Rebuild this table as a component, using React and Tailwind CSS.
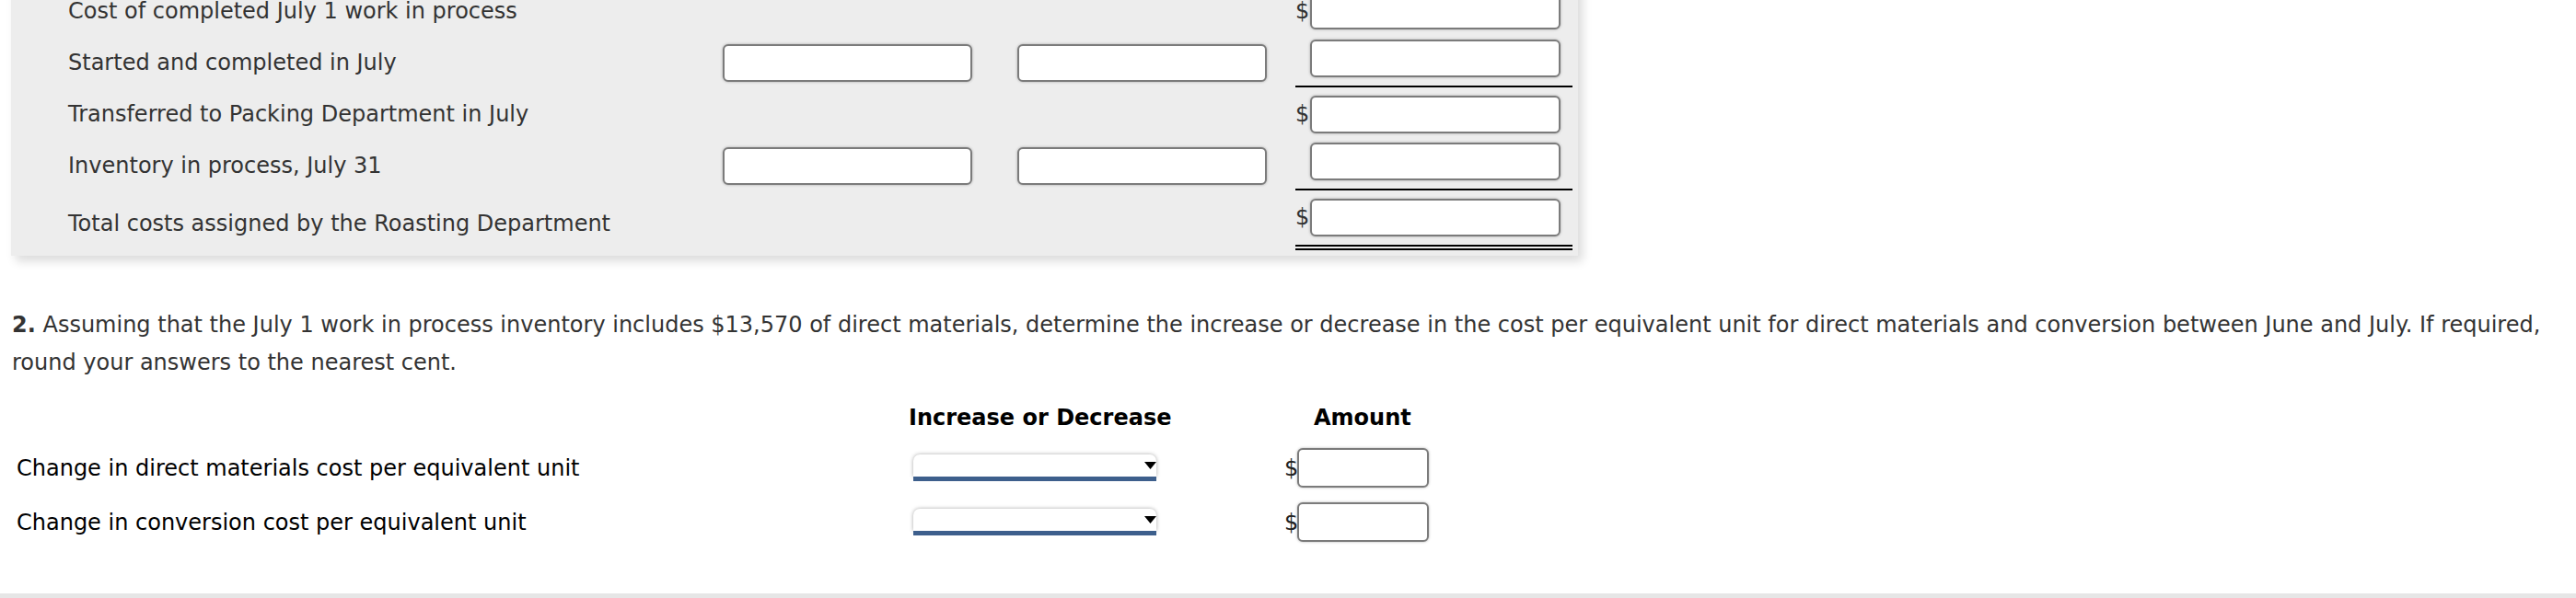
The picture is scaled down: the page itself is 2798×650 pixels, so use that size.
import React from "react";

function Box({ w = "w-[271px]" }) {
  return (
    <div
      className={`${w} h-[41px] shrink-0 bg-white border-2 border-[#7b7b7b] rounded-[6px] shadow-[0_0_3px_rgba(0,0,0,0.3)]`}
    />
  );
}

function Dollar() {
  return <span className="text-[24px] leading-none text-[#333] w-[16px] shrink-0">$</span>;
}

function PanelRow({ label, h, mid, col3, labelPad = "" }) {
  return (
    <div className={`flex ${h}`}>
      <div className={`w-[711px] shrink-0 flex items-center text-[24px] text-[#333] ${labelPad}`}>
        {label}
      </div>
      <div className="w-[320px] shrink-0 flex items-center">{mid ? <Box /> : null}</div>
      <div className="w-[302px] shrink-0 flex items-center">{mid ? <Box /> : null}</div>
      {col3}
    </div>
  );
}

function Select() {
  return (
    <div className="ml-[5px] w-[264px] h-[29px] flex flex-col">
      <div className="h-[24px] bg-white rounded-t-[7px] shadow-[0_0_4px_rgba(0,0,0,0.35)] flex items-center justify-end">
        <svg width="13" height="8" viewBox="0 0 13 8">
          <polygon points="0,0 13,0 6.5,8" fill="#000" />
        </svg>
      </div>
      <div className="h-[5px] bg-[#3d5f8c]" />
    </div>
  );
}

function AnswerRow({ label, mt }) {
  return (
    <div className={`flex items-center h-[43px] ${mt}`}>
      <div className="ml-[18px] w-[969px] shrink-0 text-[24px] text-black">{label}</div>
      <div className="w-[408px] shrink-0 flex items-center">
        <Select />
      </div>
      <div className="flex items-center">
        <span className="text-[24px] leading-none text-[#222] w-[14px]">$</span>
        <Box w="w-[143px] h-[43px]" />
      </div>
    </div>
  );
}

export default function App() {
  return (
    <div className="w-[2798px] h-[650px] overflow-hidden bg-white font-['DejaVu_Sans',Verdana,sans-serif]">
      {/* Panel */}
      <div className="-mt-[18px] ml-[12px] w-[1702px] bg-[#ededed] pl-[62px] pb-[6px] shadow-[5px_6px_10px_rgba(0,0,0,0.14)]">
        <PanelRow
          label="Cost of completed July 1 work in process"
          h="h-[59px]"
          col3={
            <div className="w-[301px] shrink-0 flex items-center">
              <Dollar />
              <Box w="w-[272px]" />
            </div>
          }
        />
        <PanelRow
          label="Started and completed in July"
          h="h-[54px]"
          mid
          col3={
            <div className="w-[301px] shrink-0 flex items-start pt-[2px] border-b-2 border-black">
              <span className="w-[16px] shrink-0" />
              <Box w="w-[272px]" />
            </div>
          }
        />
        <PanelRow
          label="Transferred to Packing Department in July"
          h="h-[58px]"
          col3={
            <div className="w-[301px] shrink-0 flex items-center">
              <Dollar />
              <Box w="w-[272px]" />
            </div>
          }
        />
        <PanelRow
          label="Inventory in process, July 31"
          h="h-[54px]"
          mid
          col3={
            <div className="w-[301px] shrink-0 flex items-start pt-[2px] border-b-2 border-black">
              <span className="w-[16px] shrink-0" />
              <Box w="w-[272px]" />
            </div>
          }
        />
        <PanelRow
          label="Total costs assigned by the Roasting Department"
          h="h-[65px]"
          labelPad="pt-[7px]"
          col3={
            <div className="w-[301px] shrink-0 flex items-start pt-[9px] border-b-[6px] border-double border-black">
              <span className="text-[24px] leading-[41px] text-[#333] w-[16px] shrink-0">$</span>
              <Box w="w-[272px]" />
            </div>
          }
        />
      </div>

      {/* Question */}
      <p className="mt-[55px] ml-[13px] w-[2785px] text-[24px] leading-[41px] text-[#333]">
        <span className="font-bold">2.</span> Assuming that the July 1 work in process inventory includes $13,570 of direct
        materials, determine the increase or decrease in the cost per equivalent unit for direct materials and
        conversion between June and July. If required, round your answers to the nearest cent.
      </p>

      {/* Answer table */}
      <div className="mt-[18px]">
        <div className="flex h-[41px] items-center text-[24px] font-bold text-black">
          <div className="w-[987px] shrink-0" />
          <div className="w-[440px] shrink-0">Increase or Decrease</div>
          <div>Amount</div>
        </div>
        <AnswerRow label="Change in direct materials cost per equivalent unit" mt="mt-[13px]" />
        <AnswerRow label="Change in conversion cost per equivalent unit" mt="mt-[16px]" />
      </div>

      <div className="mt-[56px] h-[6px] bg-[#e6e6e6]" />
    </div>
  );
}
